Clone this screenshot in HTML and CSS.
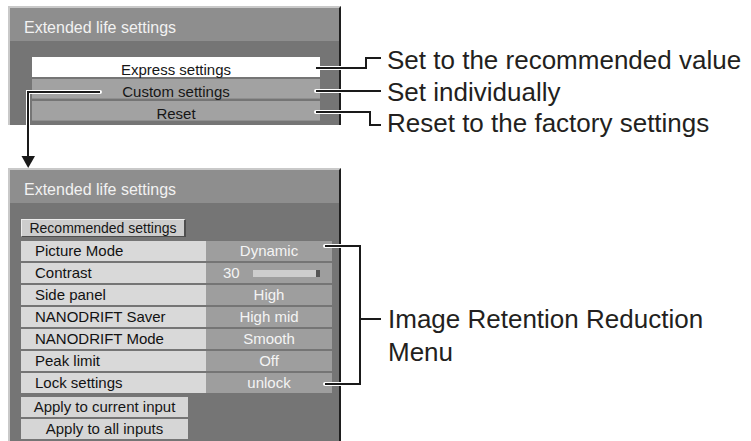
FILE: index.html
```html
<!DOCTYPE html>
<html>
  <head>
    <link rel="stylesheet" href="styles.css">
  </head>
  <body>
    <div class="page">
      <div class="stage stage-top">
        <section class="osd osd-top">
          <div class="osd-title">Extended life settings</div>
          <div class="osd-body">
            <div class="opt opt-active">Express settings</div>
            <div class="opt">Custom settings</div>
            <div class="opt">Reset</div>
          </div>
        </section>
        <ul class="notes">
          <li>Set to the recommended value</li>
          <li>Set individually</li>
          <li>Reset to the factory settings</li>
        </ul>
      </div>

      <div class="stage stage-bottom">
        <section class="osd osd-bottom">
          <div class="osd-title">Extended life settings</div>
          <div class="osd-body">
            <div class="btn btn-rec">Recommended settings</div>
            <div class="rows">
              <div class="row"><span class="key">Picture Mode</span><span class="val">Dynamic</span></div>
              <div class="row">
                <span class="key">Contrast</span>
                <span class="val val-slider"><span class="num">30</span><span class="bar"></span></span>
              </div>
              <div class="row"><span class="key">Side panel</span><span class="val">High</span></div>
              <div class="row"><span class="key">NANODRIFT Saver</span><span class="val">High mid</span></div>
              <div class="row"><span class="key">NANODRIFT Mode</span><span class="val">Smooth</span></div>
              <div class="row"><span class="key">Peak limit</span><span class="val">Off</span></div>
              <div class="row"><span class="key">Lock settings</span><span class="val">unlock</span></div>
            </div>
            <div class="apply">
              <div class="btn btn-apply">Apply to current input</div>
              <div class="btn btn-apply">Apply to all inputs</div>
            </div>
          </div>
        </section>
        <p class="note-big">Image Retention Reduction<br>Menu</p>
      </div>

      <!-- leader lines drawn over the menus -->
      <svg class="leaders" width="751" height="441" viewBox="0 0 751 441">
        <g fill="none" stroke="#fff" stroke-width="4" stroke-linecap="round">
          <path d="M316 68 H366 V58 H380" />
          <path d="M316 91 H380" />
          <path d="M316 112 H370 V125 H380" />
          <path d="M100 92 H28 V158" />
          <path d="M325 246 H360 V384 H325" />
        </g>
        <g fill="none" stroke="#1a1a1a" stroke-width="2">
          <path d="M316 68 H366 V58 H381" />
          <path d="M316 91 H381" />
          <path d="M316 112 H370 V125 H381" />
          <path d="M100 92 H28 V158" />
          <path d="M325 246 H360 V384 H325" />
          <path d="M360 319 H381" />
        </g>
        <polygon points="21.5,156 35,156 28.2,168" fill="#1a1a1a" />
      </svg>
    </div>
  </body>
</html>
```

FILE: styles.css
```css
body {
  margin: 0;
  padding: 0;
  background: #fff;
  font-family: "Liberation Sans", Arial, sans-serif;
}
.page {
  position: relative;
  width: 751px;
  height: 441px;
  overflow: hidden;
}
.stage {
  display: flex;
  align-items: flex-start;
}
.stage-top {
  height: 125px;
}
.stage-bottom {
  margin-top: 43px;
}

/* on-screen menu panels */
.osd {
  width: 333px;
  margin-left: 8px;
  box-sizing: border-box;
  border-top: 2px solid #c9c9c9;
  border-left: 2px solid #c9c9c9;
  border-right: 2px solid #1e1e1e;
  background: #757575;
}
.osd-top {
  margin-top: 6px;
}
.osd-title {
  height: 33px;
  box-sizing: border-box;
  padding: 11px 0 0 14px;
  line-height: 18px;
  font-size: 16px;
  color: #f2f2f2;
  background: #8e8e8e;
}
.osd-top .osd-body {
  padding: 16px 19px 4px 22px;
}
.opt {
  height: 20px;
  box-sizing: border-box;
  padding-top: 4px;
  margin-bottom: 2px;
  line-height: 17px;
  font-size: 15px;
  text-align: center;
  color: #161616;
  background: #a2a2a2;
  border-bottom: 1px solid #8f8f8f;
}
.opt:last-child {
  margin-bottom: 0;
}
.opt-active {
  background: #fff;
  border-bottom-color: #fff;
}

.osd-bottom .osd-body {
  padding: 16px 7px 40px 11px;
}
.btn {
  box-sizing: border-box;
  font-size: 15px;
  color: #161616;
  text-align: center;
  background: #d6d6d6;
}
.btn-rec {
  width: 165px;
  height: 18px;
  line-height: 16px;
  font-size: 14px;
  background: #cdcdcd;
  border-top: 1px solid #ececec;
  border-left: 1px solid #ececec;
  border-right: 2px solid #4e4e4e;
  border-bottom: 1px solid #4e4e4e;
}
.rows {
  display: flex;
  flex-direction: column;
  gap: 2px;
  margin-top: 4px;
}
.row {
  display: flex;
  height: 20px;
  line-height: 20px;
  font-size: 15px;
}
.key {
  width: 185px;
  box-sizing: border-box;
  padding-left: 14px;
  color: #121212;
  background: #d9d9d9;
}
.val {
  width: 126px;
  text-align: center;
  color: #f4f4f4;
  background: #9e9e9e;
}
.val-slider {
  display: flex;
  align-items: center;
  box-sizing: border-box;
  padding-left: 17px;
  text-align: left;
}
.bar {
  width: 67px;
  height: 7px;
  margin-left: 13px;
  box-sizing: border-box;
  background: #cdcdcd;
  border-right: 4px solid #555;
}
.apply {
  display: flex;
  flex-direction: column;
  gap: 2px;
  margin-top: 4px;
}
.btn-apply {
  width: 167px;
  height: 20px;
  line-height: 20px;
}

/* callout labels */
.notes {
  list-style: none;
  margin: 45px 0 0 46px;
  padding: 0;
  font-size: 26px;
  line-height: 31.5px;
  color: #231f20;
  white-space: nowrap;
}
.note-big {
  margin: 135px 0 0 47px;
  font-size: 26px;
  line-height: 33px;
  color: #231f20;
}

.leaders {
  position: absolute;
  top: 0;
  left: 0;
  pointer-events: none;
}
```
